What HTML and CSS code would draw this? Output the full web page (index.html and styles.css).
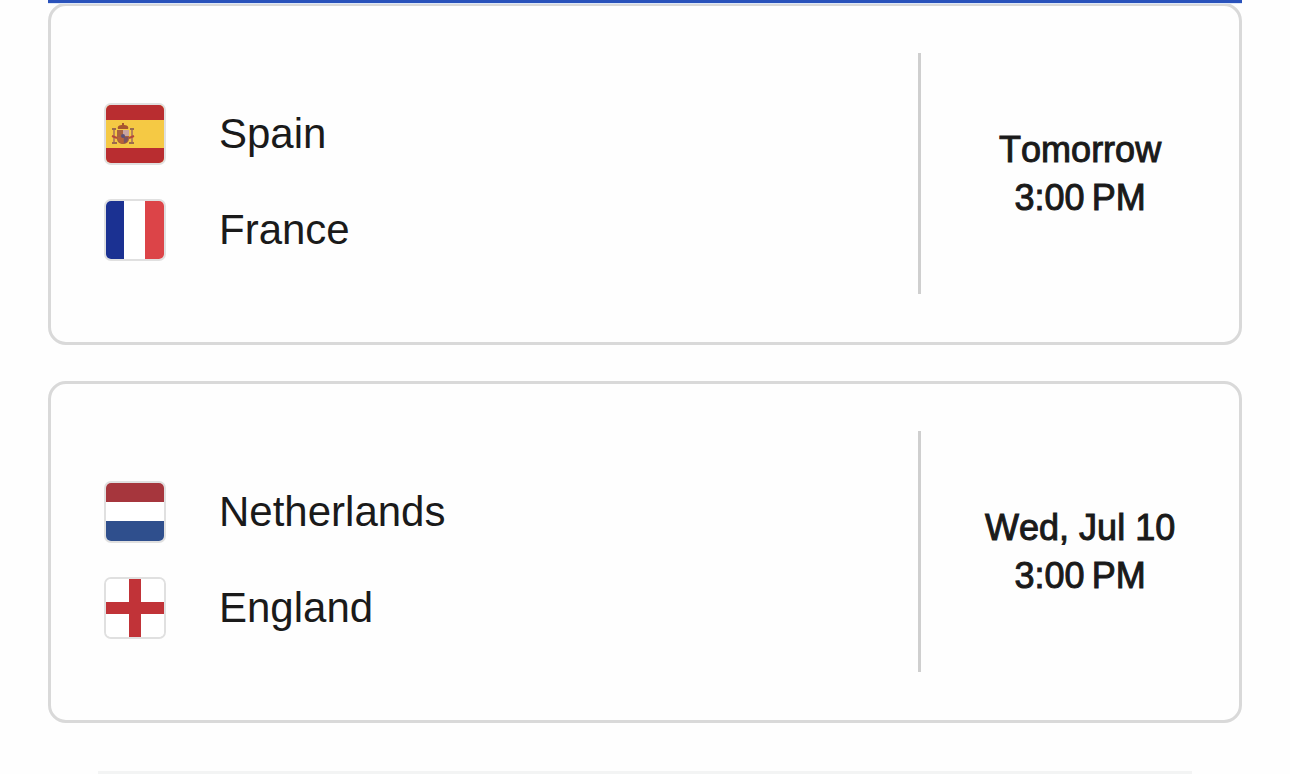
FILE: index.html
```html
<!DOCTYPE html>
<html lang="en">
<head>
    <meta charset="UTF-8">
    <meta name="viewport" content="width=device-width, initial-scale=1.0">
    <title>Matches</title>
    <link rel="stylesheet" href="styles.css">
</head>
<body>
    <main class="matches">
        <div class="tab-line"></div>

        <article class="match">
            <ul class="teams">
                <li class="team">
                    <svg class="flag" viewBox="0 0 58 58" aria-hidden="true">
                        <rect width="58" height="58" fill="#f5c944"/>
                        <rect width="58" height="15" fill="#b92d30"/>
                        <rect y="43" width="58" height="15" fill="#b92d30"/>
                        <!-- pillars -->
                        <path d="M8 25v12M26 25v12" stroke="#b98558" stroke-width="2"/>
                        <path d="M6 38h5M23 38h5M6 24h4M24 24h4" stroke="#9c6b4d" stroke-width="2"/>
                        <path d="M6 31l5 2M23 33l5-2" stroke="#b5483a" stroke-width="2"/>
                        <!-- crown -->
                        <path d="M12 24c-1-3 1-4 5-4s6 1 5 4z" fill="#a8562f"/>
                        <path d="M17 18v3" stroke="#a8562f" stroke-width="2"/>
                        <!-- shield -->
                        <path d="M11 25h12v9c0 3-3 5-6 5s-6-2-6-5z" fill="#a9623f"/>
                        <path d="M17 25h6v6h-6z" fill="#c9a4a0"/>
                        <path d="M12 32h5v6c-3 0-5-2-5-4z" fill="#b8633a"/>
                        <path d="M18 32h4v2c0 2-2 4-4 4z" fill="#7b5360"/>
                        <circle cx="17" cy="31" r="2" fill="#5b5078"/>
                    </svg>
                    <span class="team-name">Spain</span>
                </li>
                <li class="team">
                    <svg class="flag" viewBox="0 0 58 58" aria-hidden="true">
                        <rect width="58" height="58" fill="#fff"/>
                        <rect width="18" height="58" fill="#1b3192"/>
                        <rect x="39" width="19" height="58" fill="#dc4448"/>
                    </svg>
                    <span class="team-name">France</span>
                </li>
            </ul>
            <div class="kickoff">
                <span>Tomorrow</span>
                <time>3:00&#8201;PM</time>
            </div>
        </article>

        <article class="match">
            <ul class="teams">
                <li class="team">
                    <svg class="flag" viewBox="0 0 58 58" aria-hidden="true">
                        <rect width="58" height="58" fill="#fff"/>
                        <rect width="58" height="19" fill="#a6363d"/>
                        <rect y="38" width="58" height="20" fill="#2f4f8d"/>
                    </svg>
                    <span class="team-name">Netherlands</span>
                </li>
                <li class="team">
                    <svg class="flag" viewBox="0 0 58 58" aria-hidden="true">
                        <rect width="58" height="58" fill="#fff"/>
                        <path d="M23 0h12v23h23v12H35v23H23V35H0V23h23z" fill="#c13338"/>
                    </svg>
                    <span class="team-name">England</span>
                </li>
            </ul>
            <div class="kickoff">
                <span>Wed, Jul 10</span>
                <time>3:00&#8201;PM</time>
            </div>
        </article>

        <hr class="section-line">
    </main>
</body>
</html>
```

FILE: styles.css
```css
* {
    box-sizing: border-box;
}
body {
    margin: 0;
    background: #fefefe;
    color: #1a1a1a;
    font-family: "Liberation Sans", Arial, sans-serif;
}
.matches {
    padding: 0 48px;
}
.tab-line {
    position: relative;
    height: 3px;
    background: #2952bb;
    box-shadow: 0 1px 0 #dde7f8;
}
.match {
    display: flex;
    padding: 47px 0 48px;
    margin-bottom: 36px;
    border: 3px solid #d9d9d9;
    border-radius: 18px;
}
.teams {
    flex: 1;
    margin: 0;
    padding: 33px 0 16px 53px;
    list-style: none;
}
.team {
    display: flex;
    align-items: center;
    gap: 53px;
    height: 96px;
}
.flag {
    width: 62px;
    height: 62px;
    border: 2px solid #e0e0e0;
    border-radius: 7px;
}
.team-name {
    font-size: 42px;
    line-height: 48px;
}
.kickoff {
    display: flex;
    flex-direction: column;
    align-items: center;
    justify-content: center;
    width: 27%;
    border-left: 3px solid #cfcfcf;
    font-size: 36px;
    font-kerning: none;
    line-height: 48px;
    -webkit-text-stroke: 1px #1a1a1a;
}
.section-line {
    height: 3px;
    margin: 48px 50px 0;
    border: none;
    background: #f3f4f4;
}
```
